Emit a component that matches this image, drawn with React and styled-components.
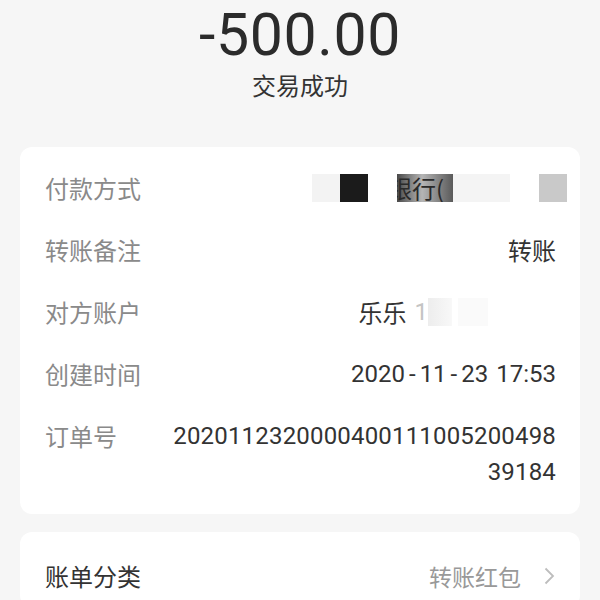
import React from "react";
import styled, { createGlobalStyle } from "styled-components";

const Global = createGlobalStyle`
  html, body { margin: 0; padding: 0; background: #f6f6f6; }
  body { font-family: Roboto, "Noto Sans CJK SC", sans-serif; }
`;

const Page = styled.div`
  width: 600px;
  height: 600px;
  overflow: hidden;
  background: #f6f6f6;
  display: flex;
  flex-direction: column;
  align-items: center;
`;

const Amount = styled.div`
  font-size: 59px;
  line-height: 70px;
  margin-top: 0;
  color: #2b2b2b;
  font-weight: 400;
  letter-spacing: 0.6px;
`;

const Status = styled.div`
  font-family: "Noto Sans CJK SC", sans-serif;
  font-size: 24px;
  line-height: 36px;
  color: #333;
  margin-top: -3px;
`;

const Card = styled.div`
  box-sizing: border-box;
  width: 560px;
  background: #fff;
  border-radius: 12px;
  padding: ${(p) => p.$pad || "10px 24px 11px 25px"};
  margin-top: ${(p) => p.$top}px;
  flex-shrink: 0;
`;

const Row = styled.div`
  display: flex;
  align-items: flex-start;
  padding: 13px 0;
  font-size: 24px;
  line-height: 36px;
`;

const Label = styled.div`
  font-family: "Noto Sans CJK SC", sans-serif;
  width: 125px;
  height: 36px;
  flex-shrink: 0;
  color: ${(p) => (p.$dark ? "#333" : "#8a8a8a")};
`;

const Value = styled.div`
  flex: 1;
  text-align: right;
  color: #333;
  word-break: break-all;
  font-family: Roboto, "Noto Sans CJK SC", sans-serif;
  letter-spacing: ${(p) => p.$ls || 0}px;
`;

const FlexValue = styled.div`
  flex: 1;
  height: 36px;
  display: flex;
  justify-content: flex-end;
  align-items: center;
  color: #333;
  font-family: "Noto Sans CJK SC", sans-serif;
`;

const Block = styled.span`
  display: block;
  flex-shrink: 0;
  width: ${(p) => p.$w}px;
  height: 28px;
  margin-left: ${(p) => p.$ml || 0}px;
  margin-right: ${(p) => p.$mr || 0}px;
  background: ${(p) => p.$bg};
  overflow: hidden;
  position: relative;
`;

const BankText = styled.span`
  position: absolute;
  left: -9px;
  top: -4px;
  font-size: 24px;
  line-height: 36px;
  color: #2a2a2a;
  white-space: nowrap;
  font-family: "Noto Sans CJK SC", sans-serif;
`;

const Name = styled.span`
  display: block;
  line-height: 36px;
`;

const Faint = styled.span`
  display: block;
  line-height: 36px;
  color: #c4c4c4;
  margin-left: 8px;
  font-family: Roboto, sans-serif;
`;

const Sep = styled.span`
  padding: 0 4px;
`;

const Gap = styled.span`
  display: inline-block;
  width: 8px;
`;

const Muted = styled.span`
  display: block;
  line-height: 36px;
  font-size: 23px;
  color: #999;
`;

const Chevron = styled.svg`
  width: 11px;
  height: 18px;
  margin-left: 23px;
  margin-right: 1px;
  flex-shrink: 0;
`;

export default function App() {
  return (
    <Page>
      <Global />
      <Amount>-500.00</Amount>
      <Status>交易成功</Status>
      <Card $top={44}>
        <Row>
          <Label>付款方式</Label>
          <FlexValue>
            <Block $w={28} $bg="#f3f3f3" />
            <Block $w={28} $bg="#1b1b1b" />
            <Block $w={56} $ml={29} $bg="linear-gradient(90deg,#4a4a4a 0%,#b5b5b5 45%,#5a5a5a 100%)">
              <BankText>银行(</BankText>
            </Block>
            <Block $w={57} $bg="#f4f4f4" />
            <Block $w={28} $ml={29} $mr={-11} $bg="#c9c9c9" />
          </FlexValue>
        </Row>
        <Row>
          <Label>转账备注</Label>
          <FlexValue>
            <Name>转账</Name>
          </FlexValue>
        </Row>
        <Row>
          <Label>对方账户</Label>
          <FlexValue>
            <Name>乐乐</Name>
            <Faint>1</Faint>
            <Block $w={24} $bg="linear-gradient(90deg,#ededed,#f8f8f8)" />
            <Block $w={30} $ml={6} $bg="#fafafa" />
            <Block $w={68} $bg="#fff" />
          </FlexValue>
        </Row>
        <Row>
          <Label>创建时间</Label>
          <Value>
            2020<Sep>-</Sep>11<Sep>-</Sep>23<Gap />17:53
          </Value>
        </Row>
        <Row>
          <Label>订单号</Label>
          <Value $ls={0.18}>202011232000040011100520049839184</Value>
        </Row>
      </Card>
      <Card $top={18} $pad="13px 24px 0 25px">
        <Row>
          <Label $dark>账单分类</Label>
          <FlexValue>
            <Muted>转账红包</Muted>
            <Chevron viewBox="0 0 11 18">
              <path d="M1.5 1.5 L9 9 L1.5 16.5" fill="none" stroke="#bdbdbd" strokeWidth="1.8" />
            </Chevron>
          </FlexValue>
        </Row>
      </Card>
    </Page>
  );
}
